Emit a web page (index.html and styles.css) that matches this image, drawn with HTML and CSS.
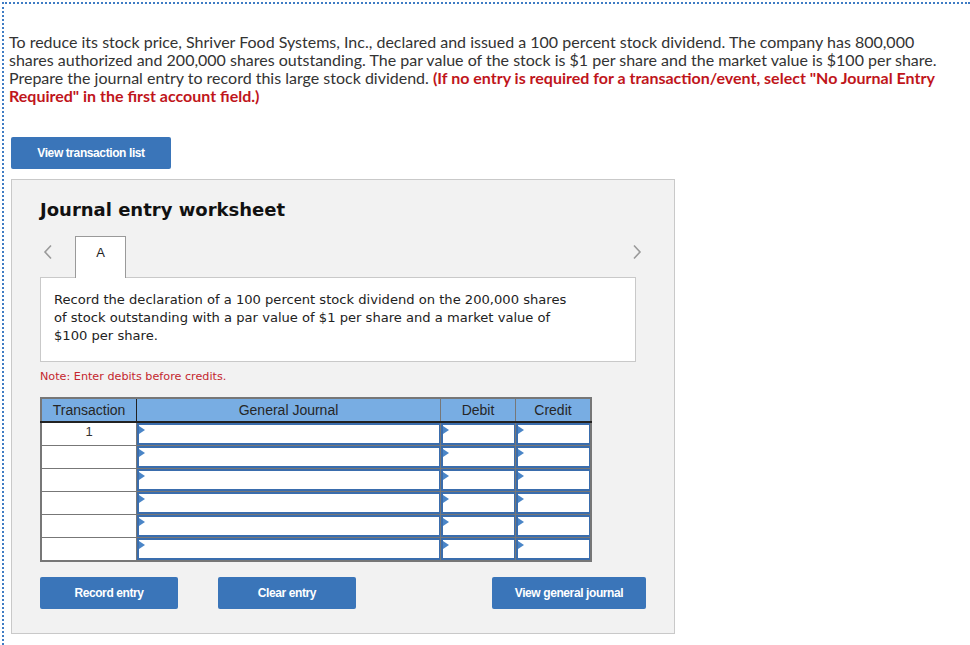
FILE: index.html
```html
<!DOCTYPE html>
<html>
<head>
<meta charset="utf-8">
<link rel="stylesheet" href="styles.css">
</head>
<body>
<div class="frame">
  <p class="prompt">To reduce its stock price, Shriver Food Systems, Inc., declared and issued a 100 percent stock dividend. The company has 800,000 shares authorized and 200,000 shares outstanding. The par value of the stock is $1 per share and the market value is $100 per share. Prepare the journal entry to record this large stock dividend. <strong class="warn">(If no entry is required for a transaction/event, select "No Journal Entry Required" in the first account field.)</strong></p>

  <button class="btn btn-list">View transaction list</button>

  <section class="panel">
    <h2 class="title">Journal entry worksheet</h2>

    <div class="tabs">
      <span class="chev chev-left">
        <svg width="10" height="16" viewBox="0 0 10 16"><polyline points="8,1.5 2,8 8,14.5" fill="none" stroke="#9a9a9a" stroke-width="1.6"/></svg>
      </span>
      <span class="tab">A</span>
      <span class="tab-spacer"></span>
      <span class="chev chev-right">
        <svg width="10" height="16" viewBox="0 0 10 16"><polyline points="2,1.5 8,8 2,14.5" fill="none" stroke="#9a9a9a" stroke-width="1.6"/></svg>
      </span>
    </div>

    <div class="desc">
      <p>Record the declaration of a 100 percent stock dividend on the 200,000 shares of stock outstanding with a par value of $1 per share and a market value of $100 per share.</p>
    </div>

    <p class="note">Note: Enter debits before credits.</p>

    <table class="journal">
      <thead>
        <tr>
          <th class="c-tr">Transaction</th>
          <th class="c-gj">General Journal</th>
          <th class="c-amt">Debit</th>
          <th class="c-amt">Credit</th>
        </tr>
      </thead>
      <tbody>
        <tr><td class="tnum">1</td><td class="inp"><div class="field"><i class="flag"></i></div></td><td class="inp"><div class="field"><i class="flag"></i></div></td><td class="inp"><div class="field"><i class="flag"></i></div></td></tr>
        <tr><td class="tnum"></td><td class="inp"><div class="field"><i class="flag"></i></div></td><td class="inp"><div class="field"><i class="flag"></i></div></td><td class="inp"><div class="field"><i class="flag"></i></div></td></tr>
        <tr><td class="tnum"></td><td class="inp"><div class="field"><i class="flag"></i></div></td><td class="inp"><div class="field"><i class="flag"></i></div></td><td class="inp"><div class="field"><i class="flag"></i></div></td></tr>
        <tr><td class="tnum"></td><td class="inp"><div class="field"><i class="flag"></i></div></td><td class="inp"><div class="field"><i class="flag"></i></div></td><td class="inp"><div class="field"><i class="flag"></i></div></td></tr>
        <tr><td class="tnum"></td><td class="inp"><div class="field"><i class="flag"></i></div></td><td class="inp"><div class="field"><i class="flag"></i></div></td><td class="inp"><div class="field"><i class="flag"></i></div></td></tr>
        <tr><td class="tnum"></td><td class="inp"><div class="field"><i class="flag"></i></div></td><td class="inp"><div class="field"><i class="flag"></i></div></td><td class="inp"><div class="field"><i class="flag"></i></div></td></tr>
      </tbody>
    </table>

    <div class="actions">
      <button class="btn btn-action">Record entry</button>
      <button class="btn btn-action">Clear entry</button>
      <button class="btn btn-action btn-wide">View general journal</button>
    </div>
  </section>
</div>
</body>
</html>
```

FILE: styles.css
```css
html, body {
  margin: 0;
  padding: 0;
  background: #ffffff;
}

body {
  padding: 2px 0 0 2px;
}

.frame {
  border-top: 2px dotted #3f7cc4;
  border-left: 2px dotted #3f7cc4;
  padding: 29px 0 11px 5px;
  min-height: 600px;
}

.prompt {
  margin: 0;
  max-width: 945px;
  font-family: "Lato", "Liberation Sans", sans-serif;
  font-size: 16px;
  line-height: 18px;
  color: #333333;
}

.warn {
  color: #c0151b;
  font-weight: 700;
}

.btn {
  display: flex;
  align-items: center;
  justify-content: center;
  height: 32px;
  padding: 0;
  border: none;
  border-radius: 2px;
  background: #3a75b9;
  color: #ffffff;
  font-family: "Liberation Sans", Arial, sans-serif;
  font-weight: 700;
  font-size: 12px;
  letter-spacing: -0.4px;
  cursor: pointer;
}

.btn-list {
  width: 160px;
  margin: 32px 0 0 2px;
}

.panel {
  width: 596px;
  margin: 10px 0 0 2px;
  padding: 19px 38px 24px 28px;
  background: #f2f2f2;
  border: 1px solid #c9c9c9;
}

.title {
  margin: 0;
  font-family: "DejaVu Sans", Verdana, sans-serif;
  font-weight: 700;
  font-size: 18px;
  line-height: 22px;
  color: #111111;
}

.tabs {
  display: flex;
  align-items: stretch;
  height: 41px;
  margin-top: 15px;
  margin-right: -6px;
}

.chev {
  display: flex;
  align-items: center;
  padding-bottom: 9px;
}

.chev-left {
  width: 35px;
  padding-left: 3px;
  box-sizing: border-box;
}

.chev-right {
  width: 10px;
}

.tab {
  background: #ffffff;
  border: 1px solid #9a9a9a;
  border-bottom: none;
  display: flex;
  justify-content: center;
  padding-top: 8px;
  box-sizing: border-box;
  width: 51px;
  height: 42px;
  font-family: "Liberation Sans", Arial, sans-serif;
  font-size: 13px;
  color: #222222;
  position: relative;
  z-index: 1;
}

.tab-spacer {
  flex: 1;
}

.desc {
  background: #ffffff;
  border: 1px solid #c9c9c9;
  padding: 13px 13px 16px 13px;
}

.desc p {
  margin: 0;
  width: 520px;
  font-family: "DejaVu Sans", Verdana, sans-serif;
  font-size: 13.1px;
  line-height: 18px;
  color: #222222;
}

.note {
  margin: 8px 0 0 0;
  font-family: "DejaVu Sans", Verdana, sans-serif;
  font-size: 11.2px;
  line-height: 14px;
  color: #c4262e;
}

.journal {
  margin-top: 13px;
  border-collapse: collapse;
  table-layout: fixed;
  width: 548px;
  border: 2px solid #777777;
  font-family: "Liberation Sans", Arial, sans-serif;
  font-size: 14px;
  color: #333333;
}

.journal th {
  height: 22px;
  padding: 0;
  background: #78ade3;
  font-weight: 400;
  color: #262626;
  border: 1px solid #777777;
  border-bottom: 2px solid #222222;
}

.journal th.c-tr {
  border-right: 1px solid #222222;
}

.c-tr { width: 94px; }
.c-gj { width: 303px; }
.c-amt { width: 74px; }

.journal td {
  height: 21px;
  padding: 0;
  border: 1px solid #777777;
  background: #ffffff;
}

.journal td.tnum {
  text-align: center;
  vertical-align: top;
  padding-top: 1px;
  height: 20px;
  font-size: 13px;
}

.journal td.inp {
  vertical-align: top;
}

.field {
  position: relative;
  height: 18px;
  border: 2px solid #3a6dad;
  border-right-width: 1px;
  background: #ffffff;
}

.flag {
  position: absolute;
  top: 1px;
  left: 0;
  width: 0;
  height: 0;
  border-top: 4px solid transparent;
  border-bottom: 4px solid transparent;
  border-left: 6px solid #4a85c7;
}

.actions {
  display: flex;
  gap: 40px;
  margin-top: 15px;
  margin-right: -10px;
}

.btn-action {
  width: 138px;
}

.btn-wide {
  width: 154px;
  margin-left: auto;
}
```
